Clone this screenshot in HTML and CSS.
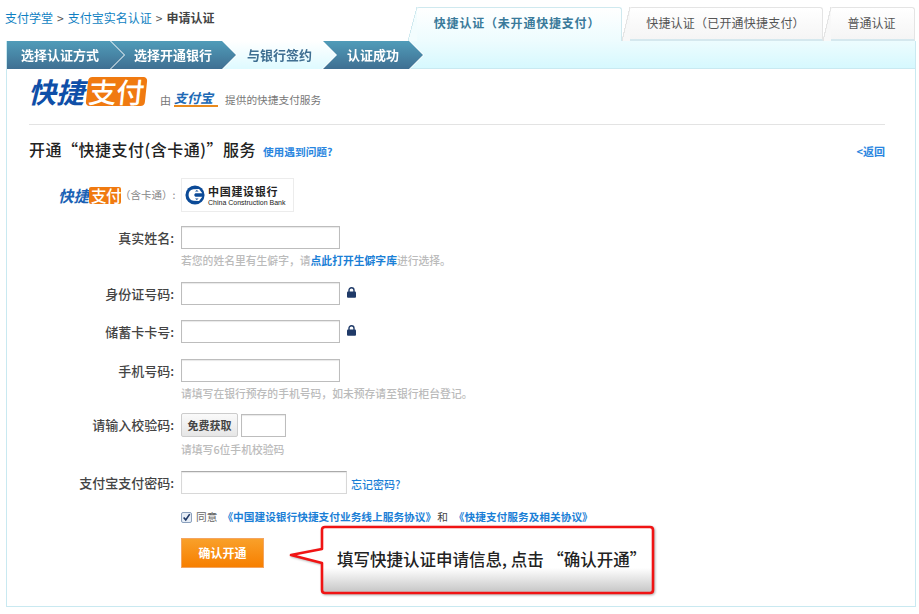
FILE: index.html
```html
<!DOCTYPE html>
<html lang="zh">
<head>
<meta charset="utf-8">
<title>申请认证</title>
<link rel="stylesheet" href="styles.css">
</head>
<body>
<header class="top">
  <nav class="crumbs"><a>支付学堂</a><i>&gt;</i><a>支付宝实名认证</a><i>&gt;</i><b>申请认证</b></nav>
  <div class="tabs">
    <div class="tab tab-on">快捷认证（未开通快捷支付）</div>
    <div class="tab tab-two">快捷认证（已开通快捷支付）</div>
    <div class="tab tab-three">普通认证</div>
  </div>
</header>
<main class="panel">
  <div class="steps">
    <div class="step s1"><span>选择认证方式</span></div>
    <div class="step s2"><span>选择开通银行</span></div>
    <div class="step s3 light"><span>与银行签约</span></div>
    <div class="step s4"><span>认证成功</span></div>
  </div>
  <div class="content">
    <div class="brand">
      <div class="logo"><em>快捷</em><strong>支付</strong></div>
      <span class="by">由</span>
      <span class="ali">支付宝</span>
      <span class="by-text">提供的快捷支付服务</span>
    </div>
    <div class="title-row">
      <h1>开通“快捷支付(含卡通)”服务</h1>
      <a class="help">使用遇到问题?</a>
      <a class="back">&lt;返回</a>
    </div>
    <div class="form">
      <div class="row bank-row">
        <div class="label mini-wrap"><span class="mini"><em>快捷</em><strong>支付</strong></span><span class="han">（含卡通）:</span></div>
        <div class="bank">
          <svg width="20" height="20" viewBox="0 0 22 22"><circle cx="11" cy="11" r="10.5" fill="#0b4a97"/><path d="M15.5 4.5 L9 4.8 A6.4 6.4 0 0 0 9.5 17.4 L15.5 17.6 L19 13 L11.5 13 A2.2 2.2 0 0 1 11.5 9 L19 9Z" fill="#fff"/><path d="M11 7.2 L15 7.2 L13 5.4Z M11 14.8 L15 14.8 L13 16.6Z" fill="#0b4a97"/></svg>
          <div class="bank-name"><b>中国建设银行</b><small>China Construction Bank</small></div>
        </div>
      </div>
      <div class="row r-name"><label class="label">真实姓名:</label><span class="field"></span></div>
      <p class="hint h-name">若您的姓名里有生僻字，请<a>点此打开生僻字库</a>进行选择。</p>
      <div class="row r-id"><label class="label">身份证号码:</label><span class="field"></span><svg class="lock" width="9" height="11" viewBox="0 0 9 11"><path d="M2 5V3.2a2.5 2.5 0 0 1 5 0V5" fill="none" stroke="#1f3a68" stroke-width="1.4"/><rect y="4.6" width="9" height="6.2" rx="1" fill="#1f3a68"/></svg></div>
      <div class="row r-card"><label class="label">储蓄卡卡号:</label><span class="field"></span><svg class="lock" width="9" height="11" viewBox="0 0 9 11"><path d="M2 5V3.2a2.5 2.5 0 0 1 5 0V5" fill="none" stroke="#1f3a68" stroke-width="1.4"/><rect y="4.6" width="9" height="6.2" rx="1" fill="#1f3a68"/></svg></div>
      <div class="row r-phone"><label class="label">手机号码:</label><span class="field"></span></div>
      <p class="hint h-phone">请填写在银行预存的手机号码，如未预存请至银行柜台登记。</p>
      <div class="row r-code"><label class="label">请输入校验码:</label><span class="get">免费获取</span><span class="field short"></span></div>
      <p class="hint h-code">请填写6位手机校验码</p>
      <div class="row r-pwd"><label class="label">支付宝支付密码:</label><span class="field wide"></span><a class="forgot">忘记密码?</a></div>
      <div class="row r-agree">
        <span class="label"></span>
        <span class="check"><svg width="11" height="11" viewBox="0 0 11 11"><path d="M2 5.5 L4.6 8.4 L9.4 1.4" fill="none" stroke="#1f3a68" stroke-width="2"/></svg></span>
        <span class="agree-t">同意</span>
        <a class="proto p1">《中国建设银行快捷支付业务线上服务协议》</a>
        <span class="and">和</span>
        <a class="proto p2">《快捷支付服务及相关协议》</a>
      </div>
      <div class="row r-btn">
        <span class="label"></span>
        <span class="confirm">确认开通</span>
        <div class="callout">
          <svg class="callout-bg" width="370" height="72" viewBox="0 0 370 72">
            <defs><linearGradient id="cg" x1="0" y1="0" x2="0" y2="1"><stop offset="0.62" stop-color="#fff"/><stop offset="1" stop-color="#c4c4c4"/></linearGradient></defs>
            <path d="M33 5 Q33 2 36 2 H361 Q364 2 364 5 V65 Q364 68 361 68 H36 Q33 68 33 65 V38 L2 30 L33 24 Z" fill="url(#cg)" stroke="#f01414" stroke-width="2.6" stroke-linejoin="round"/>
          </svg>
          <span class="callout-text">填写快捷认证申请信息, 点击 “确认开通”</span>
        </div>
      </div>
    </div>
  </div>
</main>
</body>
</html>
```
FILE: styles.css
```css
* { box-sizing: border-box; }
html, body { margin: 0; padding: 0; background: #fff; }
body { width: 919px; height: 614px; overflow: hidden; font: 12px/16px "Noto Sans CJK SC", "Liberation Sans", sans-serif; color: #444; }
a { color: #1b7fd6; }

.top { display: flex; justify-content: space-between; height: 41px; padding: 0 4px 0 5px; }
.crumbs { padding-top: 9px; color: #333; line-height: 17px; }
.crumbs a { color: #0f7fc2; }
.crumbs i { font-style: normal; margin: 0 4px; color: #555; }
.crumbs b { font-weight: 700; color: #444; }

.tabs { display: flex; align-items: flex-end; height: 41px; }
.tab { position: relative; height: 34px; line-height: 32px; text-align: center; color: #555; z-index: 0; white-space: nowrap; }
.tab::before { content: ""; position: absolute; inset: 0; z-index: -1; }
.tab-on { width: 214px; padding-left: 4px; font-weight: 700; color: #3a7a9a; letter-spacing: .8px; }
.tab-on::before { left: 8px; border: 1px solid #cfe9ef; border-bottom: 0; border-left: 0; border-radius: 3px 3px 0 0; background: linear-gradient(#fff, #edfcfe); }
.tab-on::after { content: ""; position: absolute; left: 0; top: 0; width: 9px; height: 34px; background: linear-gradient(to bottom right, #fff 47%, #cfe9ef 48%, #cfe9ef 52%, #f3fdfe 53%); z-index: -1; }
.tab-two { width: 201px; padding-left: 6px; letter-spacing: .2px; }
.tab-three { width: 92px; padding-left: 5px; }
.tab-two::before, .tab-three::before { left: 7px; border: 1px solid #e4e4e4; border-left: 0; border-bottom: 2px solid #d5e8ee; border-radius: 3px 3px 0 0; background: linear-gradient(#fff, #f5f5f5); }
.tab-two::after, .tab-three::after { content: ""; position: absolute; left: 0; top: 0; width: 8px; height: 34px; background: linear-gradient(to bottom right, #fff 46%, #e4e4e4 47%, #e4e4e4 53%, #f8f8f8 54%); z-index: -1; }

.panel { margin-left: 6px; width: 910px; height: 566px; border: 1px solid #c9e9f1; border-top: 0; }
.steps { display: flex; height: 28px; background: linear-gradient(#edfcfe, #d6f8fe); border-bottom: 1px solid #c9e9f1; }
.step { position: relative; height: 28px; margin-right: -14px; filter: drop-shadow(1px 0 0 #fff); }
.step::before { content: ""; position: absolute; inset: 0; clip-path: polygon(0 0, calc(100% - 14px) 0, 100% 50%, calc(100% - 14px) 100%, 0 100%); background: linear-gradient(#509cb9, #3f6f92); }
.step span { position: relative; display: block; font-size: 13px; line-height: 27px; color: #fff; font-weight: 700; white-space: nowrap; }
.s1 { width: 117px; z-index: 4; padding-left: 14px; }
.s2 { width: 126px; z-index: 3; padding-left: 24px; }
.s3 { width: 114px; z-index: 2; padding-left: 25px; }
.s4 { width: 101px; z-index: 1; padding-left: 25px; }
.light::before { background: linear-gradient(#fff, #defaff); }
.light span { color: #3f6f92; }

.content { padding: 0 30px 0 22px; }
.brand { display: flex; align-items: flex-end; height: 56px; border-bottom: 1px solid #e3e3e3; padding-top: 8px; padding-bottom: 17px; }
.logo { display: flex; align-items: center; height: 31px; width: 117px; font-size: 28px; line-height: 31px; font-weight: 700; }
.logo em { color: #0f4fa8; font-style: italic; width: 58px; flex: none; letter-spacing: 0; margin-left: -1px; margin-right: 1px; }
.logo strong { display: block; width: 59px; height: 29px; flex: none; padding-left: 2px; border-radius: 4px; background: #f07a10; color: #fff; font-style: normal; font-weight: 500; letter-spacing: -.5px; line-height: 28px; transform: skewX(-6deg); }
.by { margin-left: 14px; color: #777; font-size: 11px; line-height: 14px; }
.ali { margin-left: 3px; color: #2069b5; font-weight: 700; font-style: italic; font-size: 13px; line-height: 14px; border-bottom: 2px solid #e98a1c; width: 44px; height: 16px; }
.by-text { margin-left: 7px; color: #777; font-size: 10.7px; line-height: 14px; white-space: nowrap; }

.title-row { display: flex; align-items: baseline; height: 53px; padding-top: 13px; }
.title-row h1 { margin: 0; font-size: 16px; line-height: 22px; font-weight: 500; color: #222; white-space: nowrap; letter-spacing: .5px; }
.help { margin-left: 7px; font-size: 10.7px; font-weight: 700; color: #2a86e0; }
.back { margin-left: auto; font-size: 11px; font-weight: 700; color: #2a86e0; }

.form { display: flex; flex-direction: column; }
.row { display: flex; align-items: center; }
.label { width: 152px; padding-right: 7px; text-align: right; font-size: 13px; font-weight: 500; color: #444; white-space: nowrap; flex: none; }
.field { display: block; width: 159px; height: 23px; border: 1px solid #bdbdbd; background: #fff; box-shadow: inset 0 1px 1px #e8e8e8; flex: none; }
.field.short { width: 45px; margin-left: 3px; }
.field.wide { width: 166px; border-color: #d8d8d8; border-top-color: #aaa; }
.lock { margin-left: 7px; margin-top: -2px; }
.hint { margin: 0 0 0 152px; font-size: 10.8px; line-height: 14px; color: #bbb; white-space: nowrap; font-weight: 500; }
.hint a { color: #1b7fd6; font-weight: 700; }

.bank-row { height: 34px; }
.mini-wrap { display: flex; justify-content: flex-start; align-items: center; color: #888; font-weight: 400; padding: 0 0 0 27px; }
.mini { display: flex; font-size: 15.5px; line-height: 17px; font-weight: 700; margin-right: 1px; }
.mini em { color: #1b62b5; font-style: italic; width: 33px; }
.mini strong { background: #f07a10; color: #fff; font-style: normal; font-weight: 500; border-radius: 2px; width: 32px; letter-spacing: -.5px; }
.han { font-size: 10.5px; letter-spacing: 0; margin-left: -2px; }
.bank { display: flex; align-items: center; gap: 3px; width: 113px; height: 34px; border: 1px solid #ececec; padding-left: 3px; }
.bank-name { display: flex; flex-direction: column; gap: 2px; color: #222; }
.bank-name b { font-size: 11px; line-height: 12px; letter-spacing: .7px; white-space: nowrap; }
.bank-name small { font: 7px/7px "Liberation Sans", sans-serif; white-space: nowrap; }

.r-name { margin-top: 14px; }
.h-name { margin-top: 4px; }
.r-id { margin-top: 15px; height: 23px; }
.r-card { margin-top: 15px; }
.r-phone { margin-top: 16px; }
.h-phone { margin-top: 4px; }
.r-code { margin-top: 13px; }
.get { display: block; width: 57px; height: 24px; line-height: 22px; text-align: center; border: 1px solid #ccc; border-radius: 2px; background: linear-gradient(#fafafa, #e6e6e6); font-size: 11px; font-weight: 700; color: #444; flex: none; }
.h-code { margin-top: 5px; }
.r-pwd { margin-top: 15px; }
.forgot { margin-left: 4px; font-size: 11px; font-weight: 500; color: #1b7fd6; margin-top: 3px; }

.r-agree { margin-top: 15px; height: 16px; font-size: 10.7px; }
.check { display: flex; align-items: center; justify-content: center; width: 11px; height: 11px; background: #e6edf6; border: 1px solid #8aa0bd; border-radius: 2px; flex: none; }
.agree-t { margin-left: 4px; color: #666; white-space: nowrap; }
.proto { font-weight: 700; color: #1b7fd6; white-space: nowrap; }
.p1 { margin-left: 5px; }
.and { margin: 0 6px 0 1px; color: #444; }
.p2 { margin-left: 0; }

.r-btn { position: relative; margin-top: 13px; }
.confirm { display: block; width: 83px; height: 30px; line-height: 28px; text-align: center; border: 1px solid #f4a560; background: linear-gradient(#f9a02a, #f77f00); color: #fff; font-weight: 700; }
.callout { position: absolute; left: 260px; top: -13px; width: 370px; height: 72px; }
.callout-bg { display: block; filter: drop-shadow(1px 1px 1px rgba(0,0,0,.3)); }
.callout-text { position: absolute; left: 48px; top: 24px; font-size: 16.5px; line-height: 20px; font-weight: 500; color: #222; white-space: nowrap; }
```
